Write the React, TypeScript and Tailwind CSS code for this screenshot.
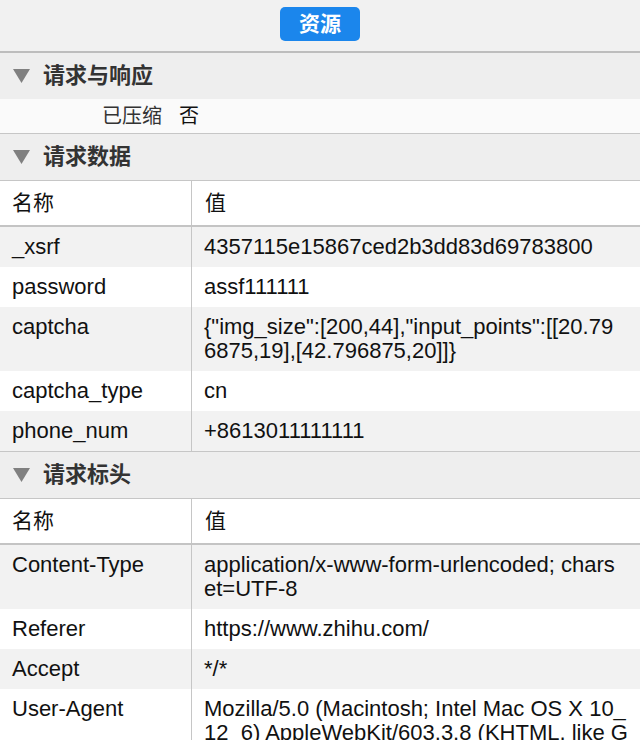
type Row = { name: string; value: string[] };

const requestData: Row[] = [
  { name: "_xsrf", value: ["4357115e15867ced2b3dd83d69783800"] },
  { name: "password", value: ["assf111111"] },
  {
    name: "captcha",
    value: ['{"img_size":[200,44],"input_points":[[20.79', "6875,19],[42.796875,20]]}"],
  },
  { name: "captcha_type", value: ["cn"] },
  { name: "phone_num", value: ["+8613011111111"] },
];

const requestHeaders: Row[] = [
  { name: "Content-Type", value: ["application/x-www-form-urlencoded; chars", "et=UTF-8"] },
  { name: "Referer", value: ["https://www.zhihu.com/"] },
  { name: "Accept", value: ["*/*"] },
  {
    name: "User-Agent",
    value: ["Mozilla/5.0 (Macintosh; Intel Mac OS X 10_", "12_6) AppleWebKit/603.3.8 (KHTML, like G"],
  },
];

function SectionHeader({ title }: { title: string }) {
  return (
    <div className="flex h-[46px] items-center bg-[#eeeeee]">
      <svg width="17" height="14" viewBox="0 0 17 14" className="ml-[13px] mr-[13px]">
        <polygon points="0,0 17,0 8.5,14" fill="#808080" />
      </svg>
      <span className="text-[22px] font-bold leading-none text-[#333333]">{title}</span>
    </div>
  );
}

function DataTable({ rows }: { rows: Row[] }) {
  return (
    <div>
      {/* HEADER */}
      <div className="flex h-[45px] border-t border-[#c6c6c6] bg-white text-[21px] text-[#111111]">
        <div className="flex w-[192px] shrink-0 items-center border-r border-[#c6c6c6] pl-[12px]">名称</div>
        <div className="flex items-center pl-[13px]">值</div>
      </div>
      <div className="h-[2px] bg-[#c4c4c4]" />

      {/* ROWS */}
      {rows.map((row, i) => (
        <div
          key={row.name}
          className={`flex text-[22px] leading-[24px] text-[#111111] ${i % 2 === 0 ? "bg-[#f2f2f2]" : "bg-white"}`}
        >
          <div className="w-[192px] shrink-0 border-r border-[#c6c6c6] py-[8px] pl-[12px]">{row.name}</div>
          <div className="py-[8px] pl-[12px] whitespace-nowrap">
            {row.value.map((line) => (
              <div key={line}>{line}</div>
            ))}
          </div>
        </div>
      ))}
    </div>
  );
}

export default function App() {
  return (
    <div
      className="h-[740px] w-[640px] overflow-hidden bg-[#f1f1f1]"
      style={{ fontFamily: '"Liberation Sans", "Noto Sans CJK SC", sans-serif' }}
    >
      {/* TOOLBAR */}
      <div className="flex h-[51px] items-start justify-center pt-[7px]">
        <div className="flex h-[34px] w-[80px] items-center justify-center rounded-[5px] bg-[#1b86ec] text-[21px] font-bold text-white">
          资源
        </div>
      </div>
      <div className="h-[2px] bg-[#bdbdbd]" />

      {/* 请求与响应 */}
      <SectionHeader title="请求与响应" />
      <div className="flex h-[34px] items-center bg-[#fafafa] text-[20px]">
        <span className="w-[162px] text-right text-[#333333]">已压缩</span>
        <span className="ml-[17px] text-[#111111]">否</span>
      </div>
      <div className="h-px bg-[#c6c6c6]" />

      {/* 请求数据 */}
      <SectionHeader title="请求数据" />
      <DataTable rows={requestData} />
      <div className="h-px bg-[#c6c6c6]" />

      {/* 请求标头 */}
      <SectionHeader title="请求标头" />
      <DataTable rows={requestHeaders} />
    </div>
  );
}
